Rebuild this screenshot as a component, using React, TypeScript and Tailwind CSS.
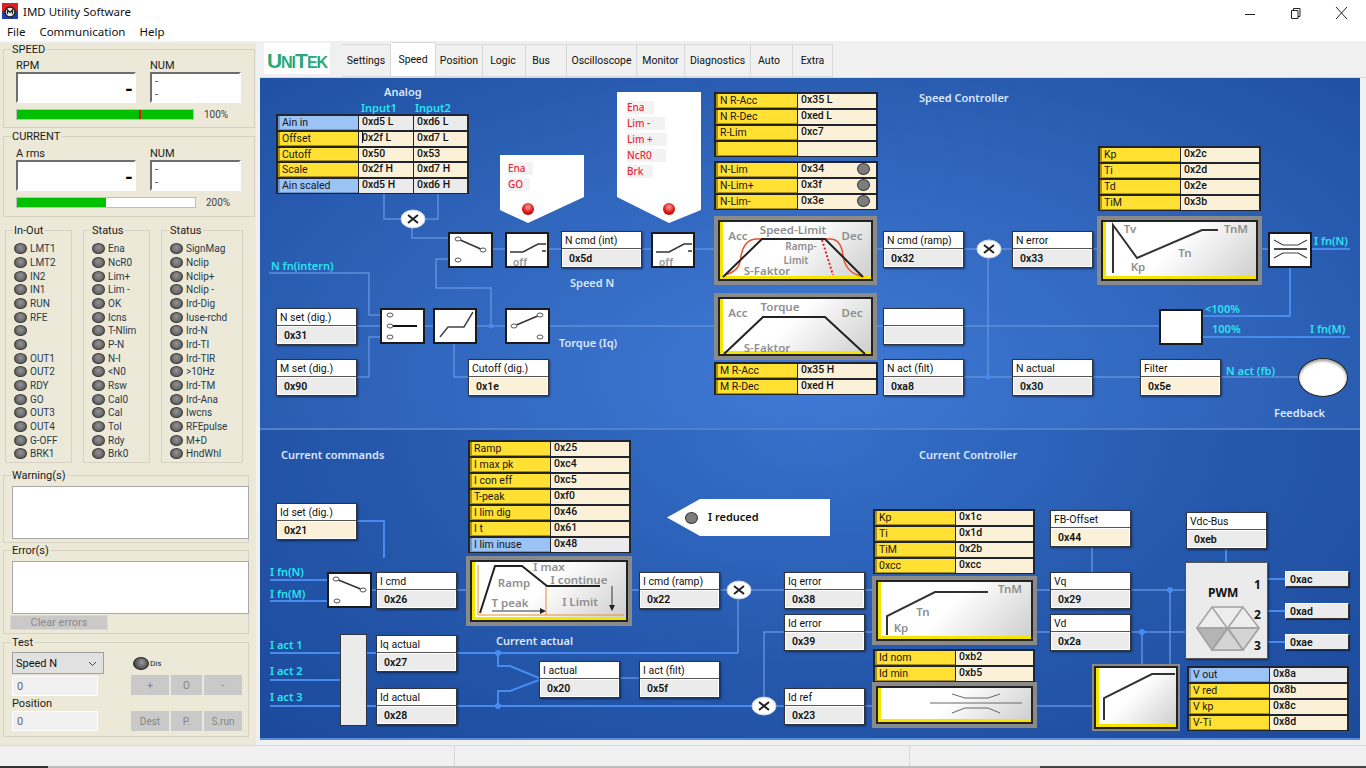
import React from "react";

type Row = { label: string; values: string[]; blue?: boolean; led?: boolean; caret?: boolean };

const inOut = ["LMT1", "LMT2", "IN2", "IN1", "RUN", "RFE", "", "", "OUT1", "OUT2", "RDY", "GO", "OUT3", "OUT4", "G-OFF", "BRK1"];
const status1 = ["Ena", "NcR0", "Lim+", "Lim -", "OK", "Icns", "T-Nlim", "P-N", "N-I", "<N0", "Rsw", "Cal0", "Cal", "Tol", "Rdy", "Brk0"];
const status2 = ["SignMag", "Nclip", "Nclip+", "Nclip -", "Ird-Dig", "Iuse-rchd", "Ird-N", "Ird-TI", "Ird-TIR", ">10Hz", "Ird-TM", "Ird-Ana", "Iwcns", "RFEpulse", "M+D", "HndWhl"];

const tabs = [
  { name: "Settings", w: "w-[49px]" },
  { name: "Speed", w: "w-[45px]", active: true },
  { name: "Position", w: "w-[47px]" },
  { name: "Logic", w: "w-[43px] pr-[2px]" },
  { name: "Bus", w: "w-[41px] pr-[10px]" },
  { name: "Oscilloscope", w: "w-[70px]" },
  { name: "Monitor", w: "w-[48px]" },
  { name: "Diagnostics", w: "w-[66px]" },
  { name: "Auto", w: "w-[42px] pr-[5px]" },
  { name: "Extra", w: "w-[40px]" },
];

const Led = () => (
  <span className="block w-[13px] h-[11px] shrink-0 rounded-[50%] border border-[#3a3a3a] bg-[radial-gradient(circle_at_50%_40%,#949494,#6a6a6a_60%,#3c3c3c)]" />
);

// Groupbox with its caption sitting on the top border
const Group = ({ title, className, children }: { title: string; className: string; children?: React.ReactNode }) => (
  <div className={`relative border border-[#d6d3c6] ${className}`}>
    <span className="absolute left-[7px] -top-[7px] bg-[#ece9d8] px-[1px] text-[11px] leading-[14px] text-[#1a1a1a]">{title}</span>
    {children}
  </div>
);

const Readout = ({ title, pct, fill, wide, tick }: { title: string; pct: string; fill: string; wide: string; tick?: boolean }) => (
  <>
    <div className="flex text-[11px] leading-[13px] text-[#222]">
      <span className="w-[134px]">{title}</span>
      <span>NUM</span>
    </div>
    <div className="flex gap-[14px]">
      <div className="w-[120px] h-[31px] border-2 border-t-[#6e6e6e] border-l-[#6e6e6e] border-r-white border-b-white bg-white flex items-center justify-end pr-[1px] pt-[2px] text-[20px] font-bold leading-none text-black">-</div>
      <div className="w-[91px] h-[31px] border-2 border-t-[#6e6e6e] border-l-[#6e6e6e] border-r-white border-b-white bg-white pl-[3px] text-[11px] leading-[13px] text-[#333]">
        <div className="pt-[1px]">-</div>
        <div>-</div>
      </div>
    </div>
    <div className="flex items-center h-[11px] mt-[6px] text-[10px] leading-[11px] text-[#444]">
      <div className={`relative h-[11px] border border-[#bdbdbd] bg-white ${wide}`}>
        <div className={`h-full bg-[#00c000] ${fill}`} />
        {tick && <div className="absolute left-[122px] top-0 h-full w-[2px] bg-[#e01010]" />}
      </div>
      <span className="ml-[10px]">{pct}</span>
    </div>
  </>
);

const LedGroup = ({ title, items, className }: { title: string; items: string[]; className: string }) => (
  <Group title={title} className={`h-[233px] pt-[11px] pl-[8px] ${className}`}>
    <div className="grid auto-rows-[13.67px]">
      {items.map((t, i) => (
        <div key={i} className="flex items-center gap-[3px] text-[10px] text-[#2a3a4c]">
          <Led />
          <span>{t}</span>
        </div>
      ))}
    </div>
  </Group>
);

const GreyBtn = ({ text, className }: { text: string; className: string }) => (
  <div className={`h-[20px] flex items-center justify-center bg-[#c9c9c9] text-[10px] text-[#858585] ${className}`}>{text}</div>
);

const Sidebar = () => (
  <div className="w-[256px] shrink-0 h-[702px] mt-[2px] bg-[#ece9d8] pt-[6px]">
    <Group title="SPEED" className="ml-[3px] w-[252px] h-[79px] pt-[9px] pl-[12px]">
      <Readout title="RPM" pct="100%" fill="w-full" wide="w-[178px]" tick />
    </Group>
    <Group title="CURRENT" className="ml-[3px] w-[252px] h-[81px] mt-[8px] pt-[10px] pl-[12px]">
      <Readout title="A rms" pct="200%" fill="w-1/2" wide="w-[180px]" />
    </Group>
    <div className="flex mt-[13px] ml-[5px] gap-[11px]">
      <LedGroup title="In-Out" items={inOut} className="w-[67px]" />
      <LedGroup title="Status" items={status1} className="w-[67px]" />
      <LedGroup title="Status" items={status2} className="w-[82px]" />
    </div>
    <Group title="Warning(s)" className="ml-[3px] w-[246px] h-[68px] mt-[12px] pt-[10px] pl-[8px]">
      <div className="w-[237px] h-[53px] bg-white border border-[#a8a8a8]" />
    </Group>
    <Group title="Error(s)" className="ml-[3px] w-[246px] h-[84px] mt-[7px] pt-[10px] pl-[8px]">
      <div className="w-[237px] h-[53px] bg-white border border-[#a8a8a8]" />
      <div className="-ml-[2px] mt-[1px] w-[98px] h-[15px] bg-[#c9c9c9] border border-[#d8d8d8] flex items-center justify-center pt-[1px] text-[11px] text-[#8a8a8a]">Clear errors</div>
    </Group>
    <Group title="Test" className="ml-[3px] w-[246px] h-[95px] mt-[8px] pt-[9px] pl-[8px] flex">
      <div className="w-[119px]">
        <div className="w-[92px] h-[22px] bg-[#e1e1e1] border border-[#a0a0a0] flex items-center justify-between pl-[3px] pr-[6px] pt-[2px] text-[11px] text-[#111]">
          <span>Speed N</span>
          <svg width="9" height="6" viewBox="0 0 9 6" fill="none" stroke="#444"><path d="M1 1l3.5 3.5L8 1" /></svg>
        </div>
        <div className="mt-[2px] w-[86px] h-[20px] bg-[#f0f0f0] border border-white pl-[4px] pt-[1px] text-[11px] leading-[18px] text-[#666]">0</div>
        <div className="mt-[1px] text-[11px] leading-[14px] text-[#222]">Position</div>
        <div className="w-[86px] h-[20px] bg-[#f0f0f0] border border-white pl-[4px] pt-[1px] text-[11px] leading-[18px] text-[#666]">0</div>
      </div>
      <div>
        <div className="h-[23px] flex items-center gap-[1px] pl-[2px] text-[8px] text-[#222]">
          <span className="block w-[16px] h-[13px] rounded-[50%] border border-[#222] bg-[radial-gradient(circle_at_55%_40%,#9a9a9a,#555_60%,#222)]" />
          <span>Dis</span>
        </div>
        <div className="flex gap-[2px]">
          <GreyBtn text="+" className="w-[38px]" />
          <GreyBtn text="O" className="w-[31px]" />
          <GreyBtn text="-" className="w-[38px]" />
        </div>
        <div className="flex gap-[2px] mt-[16px]">
          <GreyBtn text="Dest" className="w-[38px]" />
          <GreyBtn text="P." className="w-[31px]" />
          <GreyBtn text="S.run" className="w-[38px]" />
        </div>
      </div>
    </Group>
  </div>
);

// Register box: name on white, address below
const Box = ({ label, value, cream, className }: { label?: string; value?: string; cream?: boolean; className: string }) => (
  <div className={`absolute w-[81px] h-[37px] border border-[#2e3440] bg-white shadow-[1px_1px_2px_rgba(0,0,0,0.5)] flex flex-col ${className}`}>
    <div className="h-[17px] shrink-0 pl-[3px] text-[10.5px] leading-[17px] text-[#111] border-b border-[#555]">{label}</div>
    <div className={`flex-1 m-[1px] pl-[6px] pt-[2px] text-[10.5px] leading-[14px] font-semibold text-[#111] ${cream ? "bg-[#fbf1d8]" : "bg-[#ebebeb]"}`}>{value}</div>
  </div>
);

const SmallBox = ({ value, className }: { value: string; className: string }) => (
  <div className={`absolute w-[64px] h-[16px] bg-[#ebebeb] border border-white border-r-[#333] border-b-[#333] pl-[4px] text-[10.5px] leading-[16px] font-semibold text-[#111] shadow-[1px_1px_1px_rgba(0,0,0,0.5)] ${className}`}>{value}</div>
);

const ParamTable = ({ rows, className, cols = "grid-cols-[80px_1fr]" }: { rows: Row[]; className: string; cols?: string }) => (
  <div className={`absolute bg-[#20242c] px-[2px] pt-[2px] shadow-[0_1px_0_#20242c] flex flex-col gap-[2px] ${className}`}>
    {rows.map((r, i) => (
      <div key={i} className={`flex-1 min-h-0 grid gap-x-[1px] ${cols}`}>
        <div className={`overflow-hidden pl-[2px] border-l-[2px] border-b text-[10.5px] leading-[14px] text-[#171717] ${r.blue ? "bg-[#9cc3f5] border-[#6f96c8]" : "bg-[#ffe033] border-[#a8921c]"}`}>{r.label}</div>
        {r.values.map((v, j) => (
          <div key={j} className={`relative overflow-hidden pl-[3px] text-[10.5px] leading-[12px] font-medium text-[#111] ${r.blue ? "bg-[#ebebeb]" : "bg-[#fbf1d8]"}`}>
            {v}
            {r.led && <span className="absolute right-[6px] top-0 block w-[13px] h-[12px] rounded-[50%] border border-[#333] bg-[#7d7d7d]" />}
            {r.caret && j === 0 && <span className="absolute left-[3px] top-0 block w-px h-[11px] bg-[#111]" />}
          </div>
        ))}
      </div>
    ))}
  </div>
);

const Frame = ({ className, thin }: { className: string; thin?: boolean }) => (
  <div className={`absolute bg-[#8a8a8a] ${thin ? "p-[2px]" : "p-[4px]"} ${className}`}>
    <div className="w-full h-full border-2 border-[#222]">
      <div className="w-full h-full border-l-[3px] border-b-[3px] border-[#f5e400] bg-[linear-gradient(135deg,#ffffff_45%,#cfcfcf_100%)]" />
    </div>
  </div>
);

const Tile = ({ className }: { className: string }) => (
  <div className={`absolute h-[36px] bg-white border-2 border-[#1a1a1a] ${className}`} />
);

const Note = ({ text, className }: { text: string; className: string }) => (
  <span className={`absolute whitespace-nowrap font-['Noto_Sans',sans-serif] text-[11px] leading-[14px] font-semibold text-[#dbe7fb] ${className}`}>{text}</span>
);

const Cyan = ({ text, className }: { text: string; className: string }) => (
  <span className={`absolute whitespace-nowrap font-['Noto_Sans',sans-serif] text-[11px] leading-[14px] font-semibold text-[#2be4f2] ${className}`}>{text}</span>
);

const Flag = ({ text, className }: { text: string; className: string }) => (
  <div className={`h-[13px] bg-[#f2f2f2] font-['Noto_Sans',sans-serif] text-[10px] leading-[13px] font-medium text-[#f0263a] ${className}`}>{text}</div>
);

// Signal wires, drawn in page coordinates under the nodes
const Wires = () => {
  const faint = [
    "M384 193V219H405", "M438 193V219H421", "M412 228V238H448", "M448 249H1350",
    "M448 259H436V288H491V326", "M425 326H1159", "M357 326H380", "M357 377H369V337H380", "M269 273H369V315H380",
    "M454 344V377H468", "M964 377H1298", "M988 258V377",
    "M372 590H1185", "M619 678H639", "M864 632H1185", "M784 632H764V696", "M738 600V653",
    "M1092 547V572", "M1170 590V665", "M1142 632V665",
    "M864 706H1092", "M764 706H784",
  ];
  const bright = [
    "M1312 249H1350", "M1290 267V316H1203", "M1203 337H1350",
    "M357 521H384V558", "M270 580H327", "M270 601H327", "M1226 549V562",
    "M1268 579H1285", "M1268 611H1285", "M1268 642H1285",
    "M270 653H738", "M270 680H340", "M270 706H752",
    "M498 653V666H510L539 678", "M498 706V691H510L539 680",
  ];
  return (
    <svg className="absolute inset-0 w-full h-full" viewBox="260 78 1100 662" fill="none">
      {faint.map((d) => <path key={d} d={d} stroke="#5f8fdc" strokeWidth="1.5" />)}
      {bright.map((d) => <path key={d} d={d} stroke="#478bee" strokeWidth="2" />)}
      <g fill="#478bee">
        <circle cx="498" cy="653" r="3" />
        <circle cx="498" cy="706" r="3" />
        <circle cx="1170" cy="590" r="3" />
        <circle cx="1142" cy="632" r="3" />
        <circle cx="491" cy="326" r="2.5" />
        <circle cx="988" cy="377" r="2.5" />
      </g>
    </svg>
  );
};

const Mult = ({ x, y }: { x: number; y: number }) => (
  <g>
    <ellipse cx={x} cy={y} rx="12" ry="9" fill="#fff" stroke="#c9d3e2" strokeWidth="1" />
    <path d={`M${x - 5} ${y - 4}L${x + 5} ${y + 4}M${x + 5} ${y - 4}L${x - 5} ${y + 4}`} stroke="#222" strokeWidth="2" />
  </g>
);

const Off = ({ x }: { x: number }) => (
  <g>
    <path d={`M${x} 252H${x + 13}L${x + 28} 244H${x + 36}M${x + 32} 251H${x + 36}`} stroke="#333" strokeWidth="1.5" fill="none" />
    <text x={x + 3} y="266" fontSize="11" fill="#9a9a9a" fontWeight="600">off</text>
  </g>
);

const Contact = ({ x, y }: { x: number; y: number }) => (
  <ellipse cx={x} cy={y} rx="3" ry="2" fill="#fff" stroke="#555" />
);

const Cap = ({ x, y, t, size = 11.5 }: { x: number; y: number; t: string; size?: number }) => (
  <text x={x} y={y} textAnchor="middle" fontFamily="Noto Sans" fontWeight="600" fontSize={size} fill="#8f8f8f">{t}</text>
);

// Curves and captions of the graph tiles and the switch symbols
const Ink = () => (
  <svg className="absolute inset-0 w-full h-full pointer-events-none" viewBox="260 78 1100 662" fill="none">
    <Mult x={413} y={219} />
    <Mult x={989} y={249} />
    <Mult x={739} y={590} />
    <Mult x={764} y={706} />

    <path d="M458 239L483 250" stroke="#333" strokeWidth="1.5" />
    <Contact x={458} y={239} /><Contact x={483} y={250} /><Contact x={458} y={260} />
    <Off x={510} />
    <Off x={656} />
    <path d="M390 326H417" stroke="#111" strokeWidth="2" />
    <Contact x={390} y={315} /><Contact x={390} y={326} /><Contact x={390} y={337} />
    <path d="M440 337L448 327H464L473 312" stroke="#444" strokeWidth="1.5" />
    <path d="M514 326L540 315" stroke="#333" strokeWidth="1.5" />
    <Contact x={514} y={326} /><Contact x={540} y={315} /><Contact x={540} y={337} />
    <path d="M336 579L363 590" stroke="#333" strokeWidth="1.5" />
    <Contact x={336} y={579} /><Contact x={363} y={590} /><Contact x={337} y={601} />
    <path d="M1274 249H1307" stroke="#111" strokeWidth="1.5" />
    <path d="M1274 240L1283 245H1298L1307 240M1274 258L1283 253H1298L1307 258" stroke="#444" strokeWidth="1.2" />

    <path d="M725 275C735 272 740 268 741 256C743 245 748 239 757 239H830C838 239 842 245 843 256C845 268 852 274 861 276" stroke="#e8502a" strokeWidth="1.5" />
    <path d="M723 277L762 239H825L863 277" stroke="#222" strokeWidth="2" />
    <path d="M822 240L833 275" stroke="#e02020" strokeWidth="2" strokeDasharray="2 2" />
    <Cap x={793} y={234} t="Speed-Limit" />
    <Cap x={738} y={240} t="Acc" />
    <Cap x={852} y={240} t="Dec" />
    <Cap x={801} y={250} t="Ramp-" size={10} />
    <Cap x={796} y={264} t="Limit" size={10} />
    <Cap x={767} y={275} t="S-Faktor" />

    <path d="M724 354L763 317H825L865 354" stroke="#222" strokeWidth="2" />
    <Cap x={780} y={311} t="Torque" />
    <Cap x={738} y={317} t="Acc" />
    <Cap x={852} y={317} t="Dec" />
    <Cap x={767} y={352} t="S-Faktor" />

    <path d="M1113 273V225L1137 258L1202 230H1218" stroke="#333" strokeWidth="2" />
    <Cap x={1130} y={233} t="Tv" />
    <Cap x={1236} y={233} t="TnM" />
    <Cap x={1185} y={257} t="Tn" />
    <Cap x={1138} y={271} t="Kp" />

    <path d="M478 565V615H624M546 586V615" stroke="#e8902a" strokeWidth="1" />
    <path d="M480 613L495 566H522L547 586H600" stroke="#222" strokeWidth="2" />
    <path d="M492 611H540M612 586V606" stroke="#333" strokeWidth="1" />
    <path d="M540 608L546 611L540 614ZM609 605L612 611L615 605Z" fill="#222" />
    <Cap x={549} y={571} t="I max" />
    <Cap x={579} y={584} t="I continue" />
    <Cap x={514} y={587} t="Ramp" />
    <Cap x={510} y={607} t="T peak" />
    <Cap x={580} y={606} t="I Limit" />

    <path d="M887 635V616L935 592H988" stroke="#333" strokeWidth="2" />
    <Cap x={1010} y={593} t="TnM" />
    <Cap x={923} y={616} t="Tn" />
    <Cap x={901} y={632} t="Kp" />

    <path d="M930 703H1022M952 694L965 698H988L1000 694M952 713L965 708H988L1000 713" stroke="#666" strokeWidth="1" />
    <path d="M1104 720V698L1152 674H1175" stroke="#333" strokeWidth="2" />

    <g stroke="#a3a3a3" strokeWidth="1.5">
      <path d="M1197 628L1212 607H1243L1259 628L1243 650H1212Z" fill="#ededed" />
      <path d="M1197 628L1212 650L1228 628Z" fill="#b4b4b4" />
      <path d="M1228 628L1212 650H1243ZM1228 628L1243 650L1259 628Z" fill="#d4d4d4" />
      <path d="M1212 607L1243 650M1243 607L1212 650M1197 628H1259" />
    </g>
  </svg>
);

const Diagram = () => (
  <div className="relative w-[1100px] h-[662px] overflow-hidden flex flex-col bg-[#1e4d9f] shadow-[inset_0_0_0_2px_#1c4590]">
    <div className="h-[350px] bg-[radial-gradient(ellipse_at_50%_85%,#3f7ad6_0%,#2f64ba_55%,#1f50a3_100%)]" />
    <div className="h-[2px] bg-[#5080c8]" />
    <div className="flex-1 bg-[radial-gradient(ellipse_at_50%_0%,#3670ca_0%,#2558ac_55%,#1c4a9b_100%)] border-b-2 border-[#5a8ed8]" />

    <Wires />

    <Note text="Analog" className="left-[124px] top-[7px]" />
    <Cyan text="Input1" className="left-[101px] top-[23px]" />
    <Cyan text="Input2" className="left-[155px] top-[23px]" />
    <Note text="Speed Controller" className="left-[659px] top-[13px]" />
    <Note text="Speed N" className="left-[310px] top-[198px]" />
    <Note text="Torque (Iq)" className="left-[299px] top-[258px]" />
    <Note text="Current commands" className="left-[21px] top-[370px]" />
    <Note text="Current Controller" className="left-[659px] top-[370px]" />
    <Note text="Current actual" className="left-[236px] top-[556px]" />
    <Note text="Feedback" className="left-[1014px] top-[328px]" />

    <Cyan text="N fn(intern)" className="left-[11px] top-[181px]" />
    <Cyan text="I fn(N)" className="left-[1054px] top-[156px]" />
    <Cyan text="<100%" className="left-[945px] top-[224px]" />
    <Cyan text="100%" className="left-[952px] top-[244px]" />
    <Cyan text="I fn(M)" className="left-[1050px] top-[244px]" />
    <Cyan text="N act (fb)" className="left-[966px] top-[286px]" />
    <Cyan text="I fn(N)" className="left-[10px] top-[487px]" />
    <Cyan text="I fn(M)" className="left-[10px] top-[509px]" />
    <Cyan text="I act 1" className="left-[10px] top-[560px]" />
    <Cyan text="I act 2" className="left-[10px] top-[586px]" />
    <Cyan text="I act 3" className="left-[10px] top-[612px]" />

    <ParamTable
      className="left-[16px] top-[36px] w-[193px] h-[79px]"
      cols="grid-cols-[80px_54px_1fr]"
      rows={[
        { label: "Ain in", values: ["0xd5 L", "0xd6 L"], blue: true },
        { label: "Offset", values: ["0x2f L", "0xd7 L"], caret: true },
        { label: "Cutoff", values: ["0x50", "0x53"] },
        { label: "Scale", values: ["0x2f H", "0xd7 H"] },
        { label: "Ain scaled", values: ["0xd5 H", "0xd6 H"], blue: true },
      ]}
    />
    <ParamTable
      className="left-[454px] top-[14px] w-[164px] h-[64px]"
      cols="grid-cols-[81px_1fr]"
      rows={[
        { label: "N R-Acc", values: ["0x35 L"] },
        { label: "N R-Dec", values: ["0xed L"] },
        { label: "R-Lim", values: ["0xc7"] },
        { label: "", values: [""] },
      ]}
    />
    <ParamTable
      className="left-[454px] top-[83px] w-[164px] h-[48px]"
      cols="grid-cols-[81px_1fr]"
      rows={[
        { label: "N-Lim", values: ["0x34"], led: true },
        { label: "N-Lim+", values: ["0x3f"], led: true },
        { label: "N-Lim-", values: ["0x3e"], led: true },
      ]}
    />
    <ParamTable
      className="left-[454px] top-[284px] w-[164px] h-[32px]"
      cols="grid-cols-[81px_1fr]"
      rows={[
        { label: "M R-Acc", values: ["0x35 H"] },
        { label: "M R-Dec", values: ["0xed H"] },
      ]}
    />
    <ParamTable
      className="left-[838px] top-[68px] w-[163px] h-[64px]"
      rows={[
        { label: "Kp", values: ["0x2c"] },
        { label: "Ti", values: ["0x2d"] },
        { label: "Td", values: ["0x2e"] },
        { label: "TiM", values: ["0x3b"] },
      ]}
    />
    <ParamTable
      className="left-[208px] top-[362px] w-[163px] h-[112px]"
      rows={[
        { label: "Ramp", values: ["0x25"] },
        { label: "I max pk", values: ["0xc4"] },
        { label: "I con eff", values: ["0xc5"] },
        { label: "T-peak", values: ["0xf0"] },
        { label: "I lim dig", values: ["0x46"] },
        { label: "I t", values: ["0x61"] },
        { label: "I lim inuse", values: ["0x48"], blue: true },
      ]}
    />
    <ParamTable
      className="left-[613px] top-[431px] w-[162px] h-[64px]"
      rows={[
        { label: "Kp", values: ["0x1c"] },
        { label: "Ti", values: ["0x1d"] },
        { label: "TiM", values: ["0x2b"] },
        { label: "0xcc", values: ["0xcc"] },
      ]}
    />
    <ParamTable
      className="left-[613px] top-[571px] w-[162px] h-[32px]"
      rows={[
        { label: "Id nom", values: ["0xb2"] },
        { label: "Id min", values: ["0xb5"] },
      ]}
    />
    <ParamTable
      className="left-[927px] top-[588px] w-[162px] h-[64px]"
      rows={[
        { label: "V out", values: ["0x8a"], blue: true },
        { label: "V red", values: ["0x8b"] },
        { label: "V kp", values: ["0x8c"] },
        { label: "V-Ti", values: ["0x8d"] },
      ]}
    />

    <Box label="N cmd (int)" value="0x5d" className="left-[301px] top-[153px]" />
    <Box label="N cmd (ramp)" value="0x32" className="left-[623px] top-[153px]" />
    <Box label="N error" value="0x33" className="left-[752px] top-[153px]" />
    <Box label="N set (dig.)" value="0x31" className="left-[16px] top-[230px]" />
    <Box label="M set (dig.)" value="0x90" className="left-[16px] top-[281px]" />
    <Box label="Cutoff (dig.)" value="0x1e" cream className="left-[208px] top-[281px]" />
    <Box className="left-[623px] top-[230px]" />
    <Box label="N act (filt)" value="0xa8" className="left-[623px] top-[281px]" />
    <Box label="N actual" value="0x30" className="left-[752px] top-[281px]" />
    <Box label="Filter" value="0x5e" cream className="left-[880px] top-[281px]" />
    <Box label="Id set (dig.)" value="0x21" cream className="left-[16px] top-[425px]" />
    <Box label="I cmd" value="0x26" className="left-[116px] top-[494px]" />
    <Box label="I cmd (ramp)" value="0x22" className="left-[379px] top-[494px]" />
    <Box label="Iq actual" value="0x27" className="left-[116px] top-[557px]" />
    <Box label="Id actual" value="0x28" className="left-[116px] top-[610px]" />
    <Box label="I actual" value="0x20" className="left-[279px] top-[583px]" />
    <Box label="I act (filt)" value="0x5f" className="left-[379px] top-[583px]" />
    <Box label="Iq error" value="0x38" className="left-[524px] top-[494px]" />
    <Box label="Id error" value="0x39" className="left-[524px] top-[536px]" />
    <Box label="Id ref" value="0x23" className="left-[524px] top-[610px]" />
    <Box label="FB-Offset" value="0x44" cream className="left-[790px] top-[432px]" />
    <Box label="Vq" value="0x29" className="left-[790px] top-[494px]" />
    <Box label="Vd" value="0x2a" className="left-[790px] top-[536px]" />
    <Box label="Vdc-Bus" value="0xeb" className="left-[926px] top-[434px]" />

    <SmallBox value="0xac" className="left-[1025px] top-[493px]" />
    <SmallBox value="0xad" className="left-[1025px] top-[525px]" />
    <SmallBox value="0xae" className="left-[1025px] top-[556px]" />

    <Frame className="left-[454px] top-[138px] w-[163px] h-[69px]" />
    <Frame className="left-[454px] top-[215px] w-[163px] h-[67px]" />
    <Frame className="left-[837px] top-[138px] w-[165px] h-[69px]" />
    <Frame className="left-[206px] top-[478px] w-[166px] h-[70px]" />
    <Frame className="left-[612px] top-[498px] w-[165px] h-[69px]" />
    <Frame className="left-[612px] top-[604px] w-[165px] h-[46px]" />
    <Frame thin className="left-[832px] top-[586px] w-[88px] h-[67px]" />

    <Tile className="left-[188px] top-[154px] w-[45px]" />
    <Tile className="left-[245px] top-[154px] w-[44px]" />
    <Tile className="left-[391px] top-[154px] w-[44px]" />
    <Tile className="left-[120px] top-[230px] w-[45px]" />
    <Tile className="left-[173px] top-[230px] w-[44px]" />
    <Tile className="left-[245px] top-[230px] w-[45px]" />
    <Tile className="left-[1008px] top-[154px] w-[44px]" />
    <Tile className="left-[899px] top-[231px] w-[44px]" />
    <Tile className="left-[67px] top-[494px] w-[45px]" />

    <div className="absolute left-[80px] top-[556px] w-[27px] h-[92px] bg-[#ebebeb] border border-[#2e3440]" />

    <div className="absolute left-[925px] top-[484px] w-[83px] h-[97px] bg-[#ebebeb] border border-[#555] shadow-[1px_1px_2px_rgba(0,0,0,0.5)] font-['Noto_Sans',sans-serif]">
      <span className="absolute left-[22px] top-[23px] text-[12px] leading-[14px] font-bold text-[#111]">PWM</span>
      <span className="absolute left-[68px] top-[15px] text-[12px] leading-[14px] font-bold text-[#111]">1</span>
      <span className="absolute left-[68px] top-[45px] text-[12px] leading-[14px] font-bold text-[#111]">2</span>
      <span className="absolute left-[68px] top-[76px] text-[12px] leading-[14px] font-bold text-[#111]">3</span>
    </div>

    <div className="absolute left-[1038px] top-[280px] w-[50px] h-[39px] rounded-[50%] bg-white border border-[#222] shadow-[inset_0_2px_3px_rgba(0,0,0,0.4)]" />

    {/* Enable flags */}
    <div className="absolute left-[240px] top-[77px] w-[84px] h-[68px] bg-white pl-[8px] pt-[7px] flex flex-col gap-[3px] [clip-path:polygon(0_0,100%_0,100%_42px,28px_68px,0_55px)]">
      <Flag text="Ena" className="w-[25px]" />
      <Flag text="GO" className="w-[22px]" />
    </div>
    <div className="absolute left-[357px] top-[14px] w-[84px] h-[131px] bg-white pl-[10px] pt-[9px] flex flex-col gap-[3px] [clip-path:polygon(0_0,100%_0,100%_118px,52px_131px,0_105px)]">
      <Flag text="Ena" className="w-[27px]" />
      <Flag text="Lim -" className="w-[38px]" />
      <Flag text="Lim +" className="w-[40px]" />
      <Flag text="NcR0" className="w-[39px]" />
      <Flag text="Brk" className="w-[26px]" />
    </div>
    <span className="absolute left-[262px] top-[125px] block w-[12px] h-[12px] rounded-full bg-[radial-gradient(circle_at_50%_35%,#ffa0a0,#e01010_55%,#801010)]" />
    <span className="absolute left-[403px] top-[125px] block w-[12px] h-[12px] rounded-full bg-[radial-gradient(circle_at_50%_35%,#ffa0a0,#e01010_55%,#801010)]" />

    <div className="absolute left-[407px] top-[421px] w-[163px] h-[37px] bg-white [clip-path:polygon(33px_0,100%_0,100%_100%,33px_100%,0_50%)] flex items-center pl-[18px] gap-[10px] font-['Noto_Sans',sans-serif] text-[11px] font-semibold text-[#111]">
      <span className="block w-[13px] h-[12px] rounded-[50%] border border-[#333] bg-[#7d7d7d]" />
      <span>I reduced</span>
    </div>

    <Ink />
  </div>
);

const Logo = () => (
  <div className="w-[66px] h-[31px] ml-[4px] mr-[12px] mt-[2px] self-start bg-white flex items-baseline justify-center font-['Liberation_Sans',sans-serif] font-bold tracking-[-1px] text-[#27a97c] leading-[36px]">
    <span className="text-[21px]">U</span>
    <span className="text-[16px]">NI</span>
    <span className="text-[21px]">T</span>
    <span className="text-[16px]">EK</span>
  </div>
);

export default function App() {
  return (
    <div className="w-[1366px] h-[768px] overflow-hidden flex flex-col bg-[#f0f0f0] font-['Roboto',sans-serif] text-[#111]">
      {/* Title bar */}
      <div className="h-[21px] shrink-0 bg-white flex items-center">
        <svg width="16" height="16" viewBox="0 0 16 16" className="ml-[2px]">
          <rect width="16" height="8" fill="#e02020" />
          <rect y="8" width="16" height="8" fill="#1f3fb5" />
          <circle cx="8" cy="9" r="5" fill="#e8e8e8" stroke="#222" strokeWidth="1.5" />
          <path d="M5.5 11V7L8 9.5 10.5 7v4" stroke="#222" strokeWidth="1.2" fill="none" />
        </svg>
        <span className="ml-[5px] pt-[2px] font-['Noto_Sans',sans-serif] text-[11.5px] text-[#111]">IMD Utility Software</span>
        <div className="ml-auto flex items-center">
          <svg width="40" height="20" viewBox="0 0 40 20" className="mr-[5px]" stroke="#222"><path d="M20 13.5H30" /></svg>
          <svg width="40" height="20" viewBox="0 0 40 20" className="mr-[12px]" fill="none" stroke="#222"><path d="M21.5 9.5h6.5v8h-6.5zM23.5 9.5V7.5h6.5v8h-2" /></svg>
          <svg width="40" height="20" viewBox="0 0 40 20" className="mr-[4px]" stroke="#222"><path d="M14 6L25 18M25 6L14 18" /></svg>
        </div>
      </div>
      {/* Menu */}
      <div className="h-[20px] shrink-0 bg-white flex items-center pl-[7px] pt-[2px] gap-[14px] font-['Noto_Sans',sans-serif] text-[11.5px] text-[#111]">
        <span>File</span>
        <span>Communication</span>
        <span>Help</span>
      </div>
      <div className="h-[704px] shrink-0 flex">
        <Sidebar />
        <div className="flex-1 pl-[4px]">
          <div className="h-[37px] flex items-end border-b border-[#d9d9d9]">
            <Logo />
            {tabs.map((t) => (
              <div
                key={t.name}
                className={`${t.w} flex items-center justify-center border border-l-0 border-[#d9d9d9] text-[10.5px] text-[#111] ${t.active ? "h-[35px] bg-white" : "h-[33px] bg-[#f0f0f0] pt-[1px]"}`}
              >
                {t.name}
              </div>
            ))}
          </div>
          <Diagram />
        </div>
      </div>
      {/* Status bar */}
      <div className="flex-1 flex flex-col border-t border-[#d9d9d9]">
        <div className="flex-1 flex">
          <div className="w-[455px] border-r border-[#d9d9d9]" />
          <div className="w-[455px] border-r border-[#d9d9d9]" />
        </div>
        <div className="h-[2px] flex">
          <div className="w-[48px] bg-[#333]" />
          <div className="flex-1 bg-[#bdbdbd]" />
          <div className="w-[326px] bg-[#444]" />
        </div>
      </div>
    </div>
  );
}
